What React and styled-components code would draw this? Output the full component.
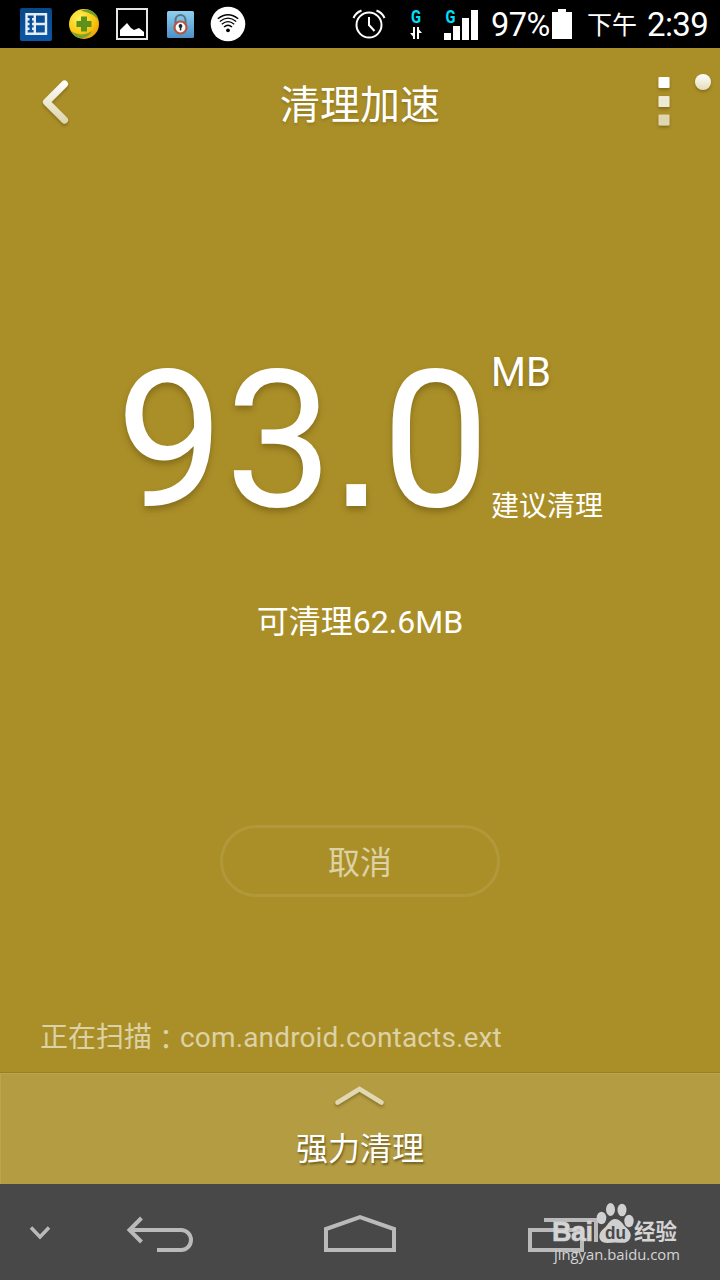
import React from "react";
import styled, { createGlobalStyle } from "styled-components";

const GlobalStyle = createGlobalStyle`
  * { box-sizing: border-box; }
  body {
    margin: 0;
    background: #aa8f28;
    font-family: Roboto, "Noto Sans CJK SC", sans-serif;
  }
`;

const Screen = styled.div`
  position: relative;
  display: flex;
  flex-direction: column;
  width: 720px;
  height: 1280px;
  overflow: hidden;
  background: #aa8f28;
  color: #fff;
`;

const StatusBar = styled.header`
  display: flex;
  justify-content: space-between;
  height: 48px;
  flex: none;
  padding: 0 13px 0 20px;
  background: #000;
`;

const StatusIcons = styled.div`
  display: flex;
  align-items: center;
  gap: ${(p) => p.$gap || 0}px;
  svg { display: block; flex: none; }
`;

const StatusText = styled.span`
  font-size: ${(p) => p.$size}px;
  line-height: 48px;
  height: 48px;
  width: ${(p) => p.$width}px;
  letter-spacing: ${(p) => p.$spacing || 0}px;
  margin-left: ${(p) => p.$left || 0}px;
  padding-top: ${(p) => p.$top || 0}px;
  white-space: nowrap;
`;

const TitleBar = styled.div`
  position: relative;
  display: grid;
  grid-template-columns: 120px 1fr 120px;
  flex: none;
  height: 112px;
  svg { display: block; }
`;

const Title = styled.h1`
  margin: 0;
  padding-top: 4px;
  font-size: 40px;
  font-weight: 400;
  line-height: 108px;
  text-align: center;
  text-shadow: 0 2px 3px rgba(70, 50, 0, 0.25);
`;

const IconButton = styled.button`
  border: 0;
  padding: 0;
  background: none;
  display: block;
`;

const Badge = styled.span`
  position: absolute;
  top: 26px;
  right: 9px;
  width: 16px;
  height: 16px;
  border-radius: 50%;
  background: linear-gradient(#fff, #e4dcb9);
  box-shadow: 0 2px 3px rgba(70, 50, 0, 0.35);
`;

const Result = styled.section`
  display: flex;
  height: 220px;
  margin-top: 168px;
  padding-left: 116px;
  flex: none;
`;

const Amount = styled.div`
  width: 375px;
  padding-top: 3px;
  font-size: 192px;
  line-height: 220px;
  letter-spacing: 1px;
  white-space: nowrap;
  text-shadow: 0 4px 6px rgba(70, 50, 0, 0.35);
`;

const DecimalPoint = styled.span`
  font-family: "Liberation Sans", sans-serif;
  font-size: 205px;
  line-height: 0;
  letter-spacing: 0;
  margin: 0 -3px 0 -6px;
`;

const Side = styled.div`
  display: flex;
  flex-direction: column;
  justify-content: space-between;
  padding: 21px 0 19px;
`;

const Unit = styled.div`
  font-size: 40px;
  line-height: 48px;
  text-shadow: 0 3px 4px rgba(70, 50, 0, 0.35);
`;

const Advice = styled.div`
  font-size: 28px;
  line-height: 44px;
`;

const Cleanable = styled.p`
  margin: 50px 0 0;
  height: 48px;
  font-size: 32px;
  line-height: 48px;
  text-align: center;
`;

const CancelButton = styled.button`
  align-self: center;
  flex: none;
  width: 280px;
  height: 72px;
  margin-top: 179px;
  border: 3px solid #b1983a;
  border-radius: 36px;
  background: none;
  color: #dcd2a5;
  font: 32px/66px Roboto, "Noto Sans CJK SC", sans-serif;
  padding: 2px 0 0;
`;

const Scanning = styled.p`
  margin: 117px 0 0;
  padding-left: 40px;
  height: 58px;
  font-size: 28px;
  line-height: 48px;
  color: #dcd2a5;
  white-space: nowrap;
`;

const Colon = styled.span`
  font-family: "Noto Sans CJK TC", sans-serif;
  line-height: 0;
  vertical-align: -3px;
`;

const PackageName = styled.span`
  letter-spacing: 0.15px;
`;

const Drawer = styled.section`
  display: flex;
  flex-direction: column;
  align-items: center;
  height: 112px;
  flex: none;
  border-top: 1px solid #98801f;
  background: #b39c42;
  box-shadow: inset 1px 1px 0 #bba64f;
  svg { display: block; margin-top: 10px; }
`;

const DrawerTitle = styled.div`
  font-size: 32px;
  line-height: 48px;
  margin-top: 14px;
  text-shadow: 1px 2px 2px rgba(50, 35, 0, 0.5);
`;

const NavBar = styled.nav`
  display: grid;
  grid-template-columns: 80px 160px 240px 240px;
  height: 96px;
  flex: none;
  background: #484849;
  svg { display: block; }
`;

const Watermark = styled.div`
  position: absolute;
  left: 552px;
  top: 1200px;
  width: 130px;
  color: #d4d4d4;
`;

const WatermarkLogo = styled.div`
  display: flex;
  height: 45px;
  align-items: flex-start;
  svg { display: block; flex: none; }
`;

const LogoWord = styled.span`
  width: ${(p) => p.$width}px;
  font-family: "Liberation Sans", "Noto Sans CJK SC", sans-serif;
  font-size: ${(p) => p.$size}px;
  font-weight: 700;
  line-height: 30px;
  padding-top: ${(p) => p.$top}px;
  letter-spacing: ${(p) => p.$spacing || 0}px;
  -webkit-text-stroke: ${(p) => p.$stroke || 0}px currentColor;
  white-space: nowrap;
`;

const WatermarkUrl = styled.div`
  font-family: "Open Sans", "Noto Sans", sans-serif;
  font-size: 14.8px;
  line-height: 18px;
  padding-left: 2px;
  white-space: nowrap;
`;

const VideoIcon = () => (
  <svg width="32" height="33" viewBox="0 0 32 33">
    <defs>
      <linearGradient id="blue" x2="0" y2="1">
        <stop stopColor="#084888" />
        <stop offset="1" stopColor="#0c57a8" />
      </linearGradient>
    </defs>
    <rect width="32" height="33" rx="2" fill="url(#blue)" />
    <g fill="none" stroke="#e4edf8" strokeWidth="2.4">
      <path d="M6.500 5v22M14.800 5v22M26 5v22M6 6.200h21M14 16h12M6 25.800h21" />
      <path d="M6 11.200h3.500M6 16h3.500M6 20.800h3.500M12 11.200h3M12 16h3M12 20.800h3" />
    </g>
  </svg>
);

const SafeIcon = () => (
  <svg width="32" height="32" viewBox="0 0 32 32">
    <defs>
      <radialGradient id="ball" cx=".35" cy=".3" r=".8">
        <stop stopColor="#fff15a" />
        <stop offset=".6" stopColor="#fcc810" />
        <stop offset="1" stopColor="#e99a08" />
      </radialGradient>
    </defs>
    <circle cx="16" cy="16" r="15" fill="url(#ball)" />
    <path d="M13 3C20-1 29 4 30.500 12c-4-5-9-7.500-17.500-9z" fill="#6fa02a" />
    <path d="M3 23c6 4 14 5 21 0-3 7-15 12-21 0z" fill="#7aa52c" />
    <path d="M13 8.500h6v4.500h4.500v6H19v4.500h-6V19H8.500v-6H13z" fill="#5c921c" />
  </svg>
);

const GalleryIcon = () => (
  <svg width="32" height="32" viewBox="0 0 32 32">
    <rect x="1" y="1" width="30" height="30" fill="#000" stroke="#e6e6e6" strokeWidth="2" />
    <path d="M4 28v-6l4-4 3-3 4 5 3 2 5-2 5 4v4z" fill="#fff" />
  </svg>
);

const LockIcon = () => (
  <svg width="27" height="27" viewBox="0 0 27 27">
    <defs>
      <linearGradient id="sky" x2="0" y2="1">
        <stop stopColor="#8fd0f0" />
        <stop offset="1" stopColor="#4b91c9" />
      </linearGradient>
    </defs>
    <rect width="27" height="27" rx="1.500" fill="url(#sky)" />
    <path d="M8.500 13V9a5 5 0 0 1 10 0v4" fill="none" stroke="#5c7080" strokeWidth="2" />
    <circle cx="13.500" cy="16.500" r="6" fill="#fff" stroke="#b8543c" strokeWidth="2.200" />
    <circle cx="13.500" cy="15" r="1.900" fill="#222" />
    <path d="M12.800 15h1.500v4.500h-1.500z" fill="#222" />
  </svg>
);

const WifiIcon = () => (
  <svg width="36" height="36" viewBox="0 0 36 36">
    <circle cx="18" cy="18" r="17.300" fill="#fff" />
    <circle cx="18" cy="24.300" r="1.900" fill="#000" />
    <g fill="none" stroke="#000" strokeWidth="1.300">
      <path d="M14 21Q18 17.500 22 21M11.800 18.300Q18 13 24.200 18.300M9.800 15.500Q18 8.800 26.200 15.500M7.800 12.700Q18 4.800 28.200 12.700" />
    </g>
  </svg>
);

const AlarmIcon = () => (
  <svg width="34" height="32" viewBox="0 0 34 32">
    <g fill="none" stroke="#fff" strokeWidth="2">
      <circle cx="17" cy="17" r="12.500" />
      <path d="M17 9v8l5.500 6M1.500 10Q4 4.500 9.500 2.500M32.500 10Q30 4.500 24.500 2.500" />
    </g>
  </svg>
);

const NetworkType = () => (
  <text y="20" fill="#00e1ff" fontFamily="Roboto" fontWeight="700" fontSize="18" textLength="10" lengthAdjust="spacingAndGlyphs">G</text>
);

const TransferIcon = () => (
  <svg width="14" height="42" viewBox="-3 0 14 42">
    <NetworkType />
    <path d="M2 24h2v12H2v-2.500L-1 30h3zM6 36V24h2v2.500L11 30H8v6z" fill="#fff" />
  </svg>
);

const SignalIcon = () => (
  <svg width="34" height="42" viewBox="-1.500 0 34 42">
    <NetworkType />
    <path d="M-1.500 30h7v7h-7zM7.500 23h7v14h-7zM16.500 15h7v22h-7zM25.500 7h7v30h-7z" fill="#fff" />
  </svg>
);

const BatteryIcon = () => (
  <svg width="20" height="30" viewBox="0 0 20 30">
    <path d="M6 0h8v3h6v27H0V3h6z" fill="#fff" />
  </svg>
);

const Gradients = () => (
  <defs>
    <linearGradient id="fade" gradientUnits="userSpaceOnUse" x1="0" y1="80" x2="0" y2="124">
      <stop stopColor="#fff" />
      <stop offset="1" stopColor="#ddd4aa" />
    </linearGradient>
    <filter id="drop" x="-30%" y="-30%" width="160%" height="180%">
      <feDropShadow dx="0" dy="2" stdDeviation="1.500" floodColor="#463200" floodOpacity=".4" />
    </filter>
  </defs>
);

const BackIcon = () => (
  <svg width="120" height="112" viewBox="0 48 120 112">
    <Gradients />
    <path d="M64.500 84L46.500 102L64.500 120" fill="none" stroke="url(#fade)" strokeWidth="7" strokeLinecap="round" strokeLinejoin="round" filter="url(#drop)" />
  </svg>
);

const MoreIcon = () => (
  <svg width="120" height="112" viewBox="600 48 120 112">
    <g filter="url(#drop)">
      <rect x="658.500" y="77" width="11" height="11" rx="1" fill="#fff" />
      <rect x="658.500" y="96" width="11" height="11" rx="1" fill="#eeead3" />
      <rect x="658.500" y="114.500" width="11" height="11" rx="1" fill="#dfd6ae" />
    </g>
  </svg>
);

const UpIcon = () => (
  <svg width="56" height="28" viewBox="332 1083 56 28">
    <path d="M337.500 1102.500L359.500 1089L381.500 1102.500" fill="none" stroke="#e0d8b0" strokeWidth="4.500" strokeLinecap="round" filter="url(#drop)" />
  </svg>
);

const NavIcon = ({ x, width, d, strokeWidth = 4 }) => (
  <svg width={width} height="96" viewBox={`${x} 1184 ${width} 96`}>
    <path d={d} fill="none" stroke="#bababa" strokeWidth={strokeWidth} />
  </svg>
);

const PawLogo = () => (
  <svg width="38" height="46" viewBox="0 0 38 46">
    <g fill="#d0d0d0">
      <ellipse cx="5.500" cy="18" rx="4.800" ry="6.200" />
      <ellipse cx="14.500" cy="9.500" rx="4.500" ry="6.500" />
      <ellipse cx="26" cy="10" rx="4.500" ry="6.300" />
      <ellipse cx="33" cy="21" rx="4.700" ry="6.200" />
      <path d="M19 19c5 0 7 4 10 7.500 5 4 7 8 5 12-3 6-9 4-15 4s-12 2-15-3c-2-5 1-9 5-12 3-3 5-8.500 10-8.500z" />
    </g>
    <text x="9" y="38.500" fill="#484849" fontFamily="Liberation Sans" fontSize="19" fontWeight="700" textLength="21" lengthAdjust="spacingAndGlyphs">du</text>
  </svg>
);

export default function App() {
  return (
    <Screen>
      <GlobalStyle />
      <StatusBar>
        <StatusIcons $gap={18.5}>
          <StatusIcons $gap={16}>
            <VideoIcon />
            <SafeIcon />
            <GalleryIcon />
          </StatusIcons>
          <StatusIcons $gap={16.5}>
            <LockIcon />
            <WifiIcon />
          </StatusIcons>
        </StatusIcons>
        <StatusIcons>
          <StatusIcons $gap={22}>
            <AlarmIcon />
            <TransferIcon />
            <SignalIcon />
          </StatusIcons>
          <StatusText $size={32.5} $width={61} $left={13} $top={1} $spacing={-0.5}>97%</StatusText>
          <BatteryIcon />
          <StatusText $size={25} $width={60} $left={15} $top={2}>下午</StatusText>
          <StatusText $size={33} $width={60} $top={1} $spacing={-0.6}>2:39</StatusText>
        </StatusIcons>
      </StatusBar>

      <TitleBar>
        <IconButton aria-label="返回"><BackIcon /></IconButton>
        <Title>清理加速</Title>
        <IconButton aria-label="更多"><MoreIcon /></IconButton>
        <Badge />
      </TitleBar>

      <Result>
        <Amount>93<DecimalPoint>.</DecimalPoint>0</Amount>
        <Side>
          <Unit>MB</Unit>
          <Advice>建议清理</Advice>
        </Side>
      </Result>
      <Cleanable>可清理62.6MB</Cleanable>
      <CancelButton>取消</CancelButton>
      <Scanning>正在扫描<Colon>：</Colon><PackageName>com.android.contacts.ext</PackageName></Scanning>

      <Drawer>
        <UpIcon />
        <DrawerTitle>强力清理</DrawerTitle>
      </Drawer>

      <NavBar>
        <NavIcon x={0} width={80} strokeWidth={3.5} d="M31 1227.500L40 1237L49 1227.500" />
        <NavIcon x={80} width={160} d="M130 1230H181a10 10 0 0 1 0 20H157M141.500 1218L129.500 1230L141.500 1242" />
        <NavIcon x={240} width={240} d="M326 1250V1229L360 1217L394 1229V1250Z" />
        <NavIcon x={480} width={240} d="M530 1230H582V1250H530ZM544 1220H596V1242" />
      </NavBar>

      <Watermark>
        <WatermarkLogo>
          <LogoWord $width={44} $size={27} $top={17} $spacing={-0.5} $stroke={0.6}>Bai</LogoWord>
          <PawLogo />
          <LogoWord $width={46} $size={21.5} $top={17}>经验</LogoWord>
        </WatermarkLogo>
        <WatermarkUrl>jingyan.baidu.com</WatermarkUrl>
      </Watermark>
    </Screen>
  );
}
